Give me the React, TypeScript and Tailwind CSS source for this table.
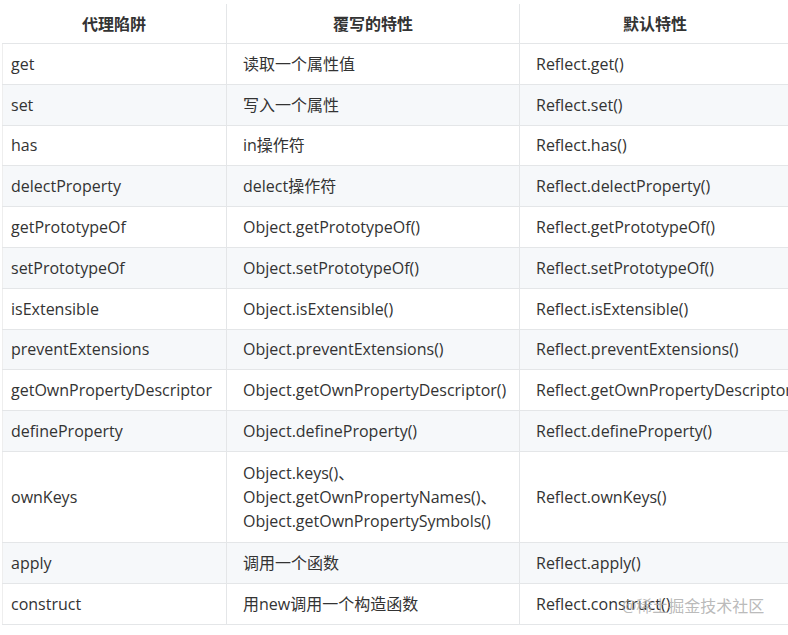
const rows: { trap: string; over: string[]; def: string }[] = [
  { trap: "get", over: ["读取一个属性值"], def: "Reflect.get()" },
  { trap: "set", over: ["写入一个属性"], def: "Reflect.set()" },
  { trap: "has", over: ["in操作符"], def: "Reflect.has()" },
  { trap: "delectProperty", over: ["delect操作符"], def: "Reflect.delectProperty()" },
  { trap: "getPrototypeOf", over: ["Object.getPrototypeOf()"], def: "Reflect.getPrototypeOf()" },
  { trap: "setPrototypeOf", over: ["Object.setPrototypeOf()"], def: "Reflect.setPrototypeOf()" },
  { trap: "isExtensible", over: ["Object.isExtensible()"], def: "Reflect.isExtensible()" },
  { trap: "preventExtensions", over: ["Object.preventExtensions()"], def: "Reflect.preventExtensions()" },
  { trap: "getOwnPropertyDescriptor", over: ["Object.getOwnPropertyDescriptor()"], def: "Reflect.getOwnPropertyDescriptor()" },
  { trap: "defineProperty", over: ["Object.defineProperty()"], def: "Reflect.defineProperty()" },
  {
    trap: "ownKeys",
    over: ["Object.keys()、", "Object.getOwnPropertyNames()、", "Object.getOwnPropertySymbols()"],
    def: "Reflect.ownKeys()",
  },
  { trap: "apply", over: ["调用一个函数"], def: "Reflect.apply()" },
  { trap: "construct", over: ["用new调用一个构造函数"], def: "Reflect.construct()" },
];

export default function App() {
  return (
    <div
      className="relative w-[788px] h-[635px] overflow-hidden bg-white text-[16px] text-[#333]"
      style={{ fontFamily: '"Open Sans", "Noto Sans CJK SC", sans-serif' }}
    >
      <div className="w-[860px] ml-[2px] mt-[4px]">
        {/* header */}
        <div className="flex h-[40px] border-b border-[#e4e6e8] font-bold">
          <div className="w-[224px] flex items-center justify-center">代理陷阱</div>
          <div className="w-[293px] flex items-center justify-center border-l border-[#e4e6e8]">覆写的特性</div>
          <div className="flex-1 flex items-center justify-center border-l border-[#e4e6e8] pr-[72px]">默认特性</div>
        </div>

        {rows.map((r, i) => (
          <div
            key={r.trap}
            className={`flex border-b border-[#e4e6e8] ${i % 2 === 1 ? "bg-[#f6f8fa]" : "bg-white"} ${
              r.over.length > 1 ? "h-[91px]" : "h-[40.8px]"
            }`}
          >
            <div className="w-[224px] flex items-center pl-[8px] border-l border-[#eeeeee]">{r.trap}</div>
            <div className="w-[293px] flex flex-col justify-center pl-[16px] border-l border-[#e4e6e8] leading-[24px]">
              {r.over.map((t) => (
                <span key={t}>{t}</span>
              ))}
            </div>
            <div className="flex-1 flex items-center pl-[16px] border-l border-[#e4e6e8] whitespace-nowrap">
              {r.def}
            </div>
          </div>
        ))}
      </div>

      <div className="absolute left-[622px] top-[594px] text-[16px] text-[#a8a8a8]/80 whitespace-nowrap">
        @稀土掘金技术社区
      </div>
    </div>
  );
}
